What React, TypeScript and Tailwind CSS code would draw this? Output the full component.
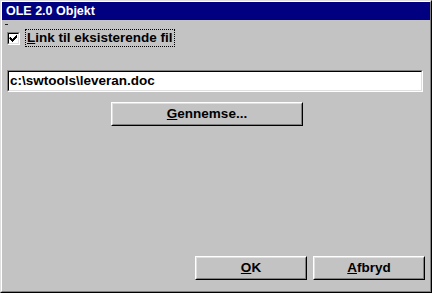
import React from "react";

const font = { fontFamily: '"Liberation Sans", Arial, sans-serif' };

function RaisedButton({ children, className = "" }: { children: React.ReactNode; className?: string }) {
  return (
    <div className={`border border-t-white border-l-white border-r-black border-b-black ${className}`}>
      <div className="w-full h-full border border-t-[#dfdfdf] border-l-[#dfdfdf] border-r-[#808080] border-b-[#808080] flex items-center justify-center text-[13.5px] font-bold text-black leading-none">
        {children}
      </div>
    </div>
  );
}

export default function App() {
  return (
    <div style={font} className="w-[432px] h-[293px] bg-[#c3c3c3] border border-t-[#dfdfdf] border-l-[#dfdfdf] border-r-black border-b-black">
      <div className="w-full h-full border border-t-white border-l-white border-r-[#808080] border-b-[#808080] flex flex-col">
        <div className="h-[18px] bg-[#000080] flex items-center pl-[4px] text-white text-[12.5px] font-bold leading-none">
          OLE 2.0 Objekt
        </div>
        <div className="flex-1 flex flex-col px-[5px]">
          <div className="h-[9px] flex flex-col">
            <div className="mt-[4px] ml-[-2px] w-[3px] h-px bg-[#202020]" />
          </div>
          <div className="flex items-center h-[18px]">
            <div className="w-[13px] h-[13px] border border-t-[#808080] border-l-[#808080] border-r-white border-b-white">
              <div className="w-full h-full bg-white border border-t-black border-l-black border-r-[#dfdfdf] border-b-[#dfdfdf] flex items-center justify-center">
                <svg width="9" height="9" viewBox="0 0 9 9">
                  <path d="M1 3h1v1h1v1h1v-1h1v-1h1v-1h1v-1h1v3h-1v1h-1v1h-1v1h-1v1h-1v-1h-1v-1h-1v-1h-1z" fill="black" />
                </svg>
              </div>
            </div>
            <div className="ml-[5px] h-[18px] border border-dotted border-black px-[1px] flex items-center text-[13.5px] font-bold text-black leading-none">
              <span><span className="underline">L</span>ink til eksisterende fil</span>
            </div>
          </div>
          <div className="mt-[23px] w-[416px] h-[22px] border border-t-[#808080] border-l-[#808080] border-r-white border-b-white">
            <div className="w-full h-full bg-white border border-t-black border-l-black border-r-[#dfdfdf] border-b-[#dfdfdf] flex items-center pl-[1px] text-[13.5px] font-bold text-black leading-none">
              c:\swtools\leveran.doc
            </div>
          </div>
          <RaisedButton className="mt-[10px] ml-[104px] w-[192px] h-[24px]">
            <span><span className="underline">G</span>ennemse...</span>
          </RaisedButton>
          <div className="mt-auto mb-[11px] flex justify-end gap-[6px]">
            <RaisedButton className="w-[112px] h-[24px]">
              <span><span className="underline">O</span>K</span>
            </RaisedButton>
            <RaisedButton className="w-[112px] h-[24px]">
              <span><span className="underline">A</span>fbryd</span>
            </RaisedButton>
          </div>
        </div>
      </div>
    </div>
  );
}
